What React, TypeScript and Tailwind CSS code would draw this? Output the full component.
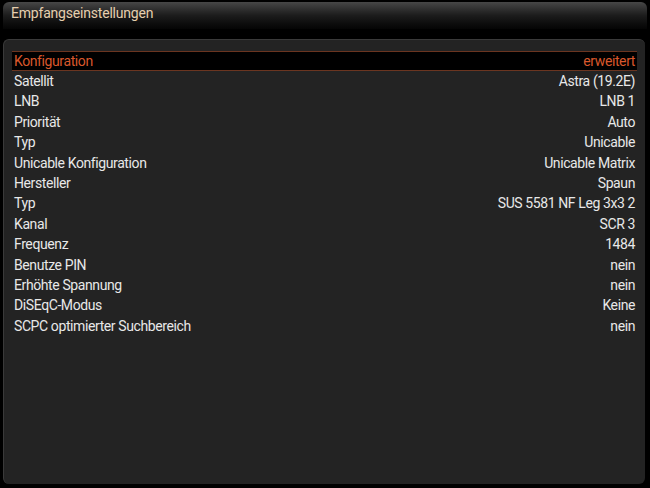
const rows: [string, string][] = [
  ["Konfiguration", "erweitert"],
  ["Satellit", "Astra (19.2E)"],
  ["LNB", "LNB 1"],
  ["Priorität", "Auto"],
  ["Typ", "Unicable"],
  ["Unicable Konfiguration", "Unicable Matrix"],
  ["Hersteller", "Spaun"],
  ["Typ", "SUS 5581 NF Leg 3x3 2"],
  ["Kanal", "SCR 3"],
  ["Frequenz", "1484"],
  ["Benutze PIN", "nein"],
  ["Erhöhte Spannung", "nein"],
  ["DiSEqC-Modus", "Keine"],
  ["SCPC optimierter Suchbereich", "nein"],
];

export default function App() {
  return (
    <div
      className="w-[650px] h-[488px] bg-black overflow-hidden pt-[2px] px-[3px]"
      style={{ fontFamily: "Roboto, 'Liberation Sans', sans-serif" }}
    >
      {/* Title bar */}
      <div className="h-[27px] rounded-t-[6px] bg-gradient-to-b from-[#474747] via-[#1c1c1c] to-[#050505] flex items-center pl-[8px] pb-[4px]">
        <span className="text-[14px] text-[#e6cfae] tracking-[-0.2px]">Empfangseinstellungen</span>
      </div>

      {/* Settings list */}
      <div className="mt-[10px] h-[445px] w-[642px] rounded-[6px] bg-[#232323] border-t border-l border-[#3a3a3a] pt-[11px] px-[8px]">
        {rows.map(([label, value], i) => (
          <div
            key={i}
            className={`h-[20.4px] flex items-center justify-between px-[2px] text-[14px] tracking-[-0.4px] ${
              i === 0
                ? "bg-black border-y border-[#6b3520] text-[#d9582c]"
                : "text-[#e8e8e8]"
            }`}
          >
            <span>{label}</span>
            <span>{value}</span>
          </div>
        ))}
      </div>
    </div>
  );
}
